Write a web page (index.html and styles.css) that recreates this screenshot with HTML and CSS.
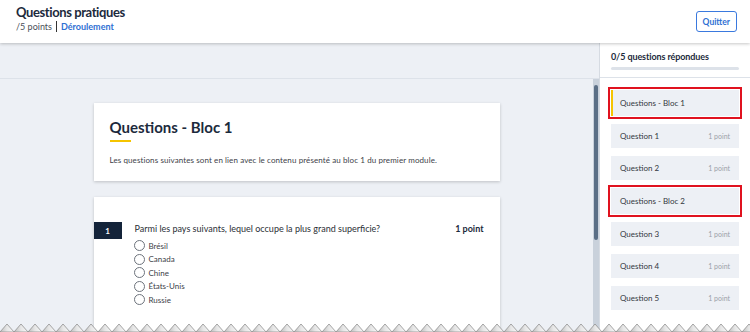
FILE: index.html
```html
<!DOCTYPE html>
<html lang="fr">
<head>
    <meta charset="UTF-8">
    <meta name="viewport" content="width=device-width, initial-scale=1.0">
    <title>Questions pratiques</title>
    <link rel="stylesheet" href="styles.css">
</head>
<body>
    <div class="app">
        <header class="topbar">
            <div class="topbar-info">
                <h1 class="topbar-title">Questions pratiques</h1>
                <div class="topbar-meta">
                    <span class="points">/5 points</span>
                    <span class="sep"></span>
                    <a class="link" href="#">Déroulement</a>
                </div>
            </div>
            <button class="btn-quit">Quitter</button>
        </header>

        <div class="workspace">
            <main class="main">
                <div class="main-top"></div>
                <div class="main-scroll">
                    <div class="content">
                        <section class="card intro">
                            <h2 class="intro-title">Questions - Bloc 1</h2>
                            <div class="intro-bar"></div>
                            <p class="intro-text">Les questions suivantes sont en lien avec le contenu présenté au bloc 1 du premier module.</p>
                        </section>

                        <section class="card question">
                            <div class="q-head">
                                <span class="q-num">1</span>
                                <span class="q-text">Parmi les pays suivants, lequel occupe la plus grand superficie?</span>
                                <span class="q-points">1 point</span>
                            </div>
                            <ul class="options">
                                <li><span class="radio"></span>Brésil</li>
                                <li><span class="radio"></span>Canada</li>
                                <li><span class="radio"></span>Chine</li>
                                <li><span class="radio"></span>États-Unis</li>
                                <li><span class="radio"></span>Russie</li>
                            </ul>
                        </section>
                    </div>
                    <div class="scrollbar"><div class="thumb"></div></div>
                </div>
            </main>

            <aside class="sidebar">
                <div class="progress-box">
                    <div class="progress-label">0/5 questions répondues</div>
                    <div class="progress-track"></div>
                </div>
                <ul class="nav">
                    <li class="nav-item block current marked">Questions - Bloc 1</li>
                    <li class="nav-item"><span>Question 1</span><span class="pts">1 point</span></li>
                    <li class="nav-item"><span>Question 2</span><span class="pts">1 point</span></li>
                    <li class="nav-item block marked">Questions - Bloc 2</li>
                    <li class="nav-item"><span>Question 3</span><span class="pts">1 point</span></li>
                    <li class="nav-item"><span>Question 4</span><span class="pts">1 point</span></li>
                    <li class="nav-item"><span>Question 5</span><span class="pts">1 point</span></li>
                </ul>
            </aside>
        </div>

        <svg class="torn" width="100%" height="11" aria-hidden="true">
            <defs>
                <linearGradient id="toothShade" x1="0" y1="0" x2="1" y2="0">
                    <stop offset="0" stop-color="#bdbdbd"/>
                    <stop offset="0.5" stop-color="#e6e6e6"/>
                    <stop offset="1" stop-color="#f7f7f7"/>
                </linearGradient>
                <pattern id="teeth" width="14" height="11" patternUnits="userSpaceOnUse">
                    <polygon points="0,11 7,3 14,11" fill="url(#toothShade)" stroke="#8f8f8f" stroke-width="0.8"/>
                </pattern>
            </defs>
            <rect width="100%" height="11" fill="url(#teeth)"/>
        </svg>
    </div>
</body>
</html>
```

FILE: styles.css
```css
* {
    box-sizing: border-box;
}

body {
    margin: 0;
    font-family: Lato, "Open Sans", sans-serif;
    color: #2b2f36;
    background: #fff;
}

.app {
    position: relative;
    height: 332px;
    display: flex;
    flex-direction: column;
    overflow: hidden;
}

/* header */
.topbar {
    height: 43px;
    flex-shrink: 0;
    display: flex;
    align-items: flex-start;
    justify-content: space-between;
    padding: 0 13px 0 16px;
    background: #fff;
    box-shadow: 0 1px 3px rgba(0, 0, 0, 0.22);
    position: relative;
    z-index: 2;
}

.topbar-title {
    margin: 4px 0 0;
    font-size: 13px;
    font-weight: 700;
    color: #1c2a3c;
    letter-spacing: -0.4px;
}

.topbar-meta {
    display: flex;
    align-items: center;
    margin-top: 1px;
    font-size: 9px;
}

.points {
    color: #4a4f57;
}

.sep {
    width: 1px;
    height: 11px;
    background: #333;
    margin: 0 4px;
}

.link {
    color: #2e6fd3;
    font-weight: 700;
    text-decoration: none;
}

.btn-quit {
    margin-top: 11px;
    height: 21px;
    padding: 0 6px;
    font-family: inherit;
    font-size: 8.5px;
    font-weight: 700;
    color: #2e6fd3;
    background: #fff;
    border: 1px solid #3a79de;
    border-radius: 3px;
}

/* body */
.workspace {
    flex: 1;
    display: flex;
    min-height: 0;
}

.main {
    flex: 1;
    display: flex;
    flex-direction: column;
    background: #edf0f5;
    border-right: 1px solid #d6dbe2;
}

.main-top {
    height: 36px;
    flex-shrink: 0;
    border-bottom: 1px solid #dde2e9;
}

.main-scroll {
    flex: 1;
    display: flex;
    min-height: 0;
}

.content {
    flex: 1;
    padding: 24px 0 0;
    display: flex;
    flex-direction: column;
    align-items: center;
    gap: 16px;
}

.scrollbar {
    width: 6px;
    background: #c9d1db;
    padding: 6px 1px 0;
}

.thumb {
    height: 155px;
    background: #5b6f86;
    border-radius: 2px;
}

.card {
    width: 406px;
    background: #fff;
    box-shadow: 0 1px 3px rgba(0, 0, 0, 0.2);
}

.intro {
    height: 78px;
    padding: 15px 16px 0;
}

.intro-title {
    margin: 0;
    font-size: 15px;
    font-weight: 700;
    color: #1c2a3c;
}

.intro-bar {
    width: 21px;
    height: 2px;
    background: #f5c400;
    margin-top: 4px;
}

.intro-text {
    margin: 13px 0 0;
    font-size: 8px;
    letter-spacing: 0.1px;
    color: #3d4148;
}

.question {
    flex: 1;
    padding-top: 25px;
}

.q-head {
    display: flex;
    align-items: center;
    padding-right: 16px;
}

.q-num {
    width: 28px;
    height: 17px;
    display: flex;
    align-items: center;
    justify-content: center;
    background: #14243a;
    color: #fff;
    font-size: 8px;
    font-weight: 700;
    margin-right: 13px;
}

.q-text {
    flex: 1;
    font-size: 9px;
    color: #2b2f36;
    margin-top: -5px;
}

.q-points {
    font-size: 9px;
    font-weight: 700;
    color: #1c2a3c;
    margin-top: -5px;
}

.options {
    list-style: none;
    margin: 0;
    padding: 0 0 0 40px;
}

.options li {
    display: flex;
    align-items: center;
    height: 13.5px;
    font-size: 8px;
    color: #3d4148;
}

.radio {
    width: 11px;
    height: 11px;
    border: 1px solid #6d737c;
    border-radius: 50%;
    margin-right: 4px;
}

/* sidebar */
.sidebar {
    width: 150px;
    flex-shrink: 0;
    background: #fff;
}

.progress-box {
    height: 35px;
    padding: 8px 11px 0;
    border-bottom: 1px solid #dde2e9;
}

.progress-label {
    font-size: 9px;
    font-weight: 700;
    color: #1c2a3c;
    letter-spacing: -0.1px;
}

.progress-track {
    height: 3px;
    margin-top: 5px;
    background: #dde2e9;
    border-radius: 2px;
}

.nav {
    list-style: none;
    margin: 0;
    padding: 12px 11px 0;
    display: flex;
    flex-direction: column;
    gap: 8px;
}

.nav-item {
    height: 24px;
    display: flex;
    align-items: center;
    justify-content: space-between;
    padding: 0 9px;
    background: #edf0f5;
    font-size: 8px;
    color: #33373e;
}

.nav-item.block {
    height: 26px;
}

.nav-item.current {
    border-left: 2px solid #f5c400;
    padding-left: 7px;
}

.nav-item.marked {
    outline: 2px solid #e0121f;
    outline-offset: 1px;
}

.pts {
    font-size: 7px;
    color: #9aa0a8;
}

/* torn bottom edge drawn over the page */
.torn {
    position: absolute;
    left: 0;
    bottom: 0;
    display: block;
}
```
